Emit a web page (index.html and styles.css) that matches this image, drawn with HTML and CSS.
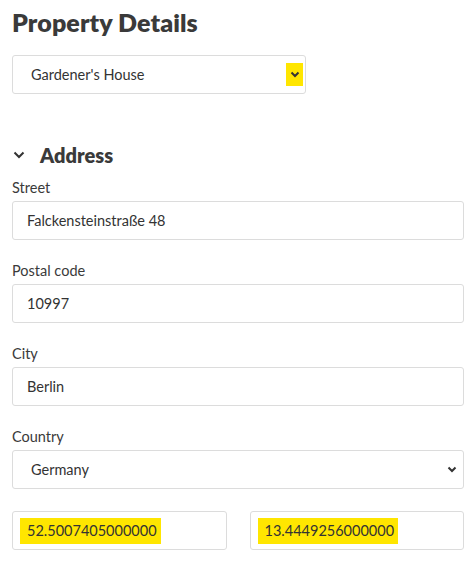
FILE: index.html
```html
<!DOCTYPE html>
<html>
<head>
<meta charset="utf-8">
<link rel="stylesheet" href="styles.css">
</head>
<body>
<div class="page">
  <h1 class="title">Property Details</h1>
  <div class="select select-top">
    <span class="select-text">Gardener's House</span>
    <span class="chev-mark"><svg width="10" height="7" viewBox="0 0 10 7"><path d="M1.5 1.5 L5 5 L8.5 1.5" fill="none" stroke="#333" stroke-width="2"/></svg></span>
  </div>

  <div class="section-head">
    <svg class="sec-chev" width="12" height="8" viewBox="0 0 12 8"><path d="M1.5 1.5 L6 6 L10.5 1.5" fill="none" stroke="#333" stroke-width="2"/></svg>
    <h2 class="section-title">Address</h2>
  </div>

  <div class="field">
    <label class="label">Street</label>
    <div class="input">Falckensteinstraße 48</div>
  </div>
  <div class="field">
    <label class="label">Postal code</label>
    <div class="input">10997</div>
  </div>
  <div class="field">
    <label class="label">City</label>
    <div class="input">Berlin</div>
  </div>
  <div class="field">
    <label class="label">Country</label>
    <div class="select select-wide">
      <span class="select-text">Germany</span>
      <svg class="plain-chev" width="10" height="7" viewBox="0 0 10 7"><path d="M1.5 1.5 L5 5 L8.5 1.5" fill="none" stroke="#333" stroke-width="2"/></svg>
    </div>
  </div>
  <div class="coords">
    <div class="input coord"><span class="hl">52.5007405000000</span></div>
    <div class="input coord"><span class="hl">13.4449256000000</span></div>
  </div>
</div>
</body>
</html>
```
FILE: styles.css
```css
* { box-sizing: border-box; }
body {
  margin: 0;
  background: #fff;
  font-family: "Lato", "Open Sans", sans-serif;
  color: #333;
}
.page {
  padding: 0 12px;
  width: 464px;
}
.title {
  margin: 0;
  padding-top: 6px;
  font-size: 25px;
  line-height: 32px;
  font-weight: 800;
  color: #3a3a3a;
  letter-spacing: 0.1px;
}
.select {
  display: flex;
  align-items: center;
  justify-content: space-between;
  border: 1px solid #dcdcdc;
  border-radius: 3px;
  background: #fff;
  font-size: 14.5px;
  color: #333;
}
.select-top {
  margin-top: 17px;
  width: 294px;
  height: 39px;
  padding: 0 2px 0 18px;
}
.chev-mark {
  width: 17px;
  height: 23px;
  background: #ffe600;
  display: flex;
  align-items: center;
  justify-content: center;
}
.section-head {
  display: flex;
  align-items: center;
  margin-top: 49px;
  height: 24px;
}
.sec-chev { margin-left: 1px; margin-right: 15px; }
.section-title {
  margin: 0;
  font-size: 20px;
  font-weight: 800;
  color: #3a3a3a;
}
.field { margin-top: 12px; }
.field + .field { margin-top: 22px; }
.label {
  display: block;
  font-size: 14.5px;
  line-height: 18px;
  color: #3a3a3a;
  margin-bottom: 4px;
}
.input {
  height: 39px;
  border: 1px solid #dcdcdc;
  border-radius: 3px;
  display: flex;
  align-items: center;
  padding-left: 14px;
  font-size: 14.5px;
  color: #333;
  width: 452px;
}
.select-wide {
  width: 452px;
  height: 39px;
  padding: 0 6px 0 18px;
}
.coords {
  display: flex;
  gap: 23px;
  margin-top: 22px;
  width: 452px;
}
.coord {
  flex: 1;
  width: auto;
  padding-left: 7px;
}
.hl {
  display: inline-block;
  background: #ffe600;
  height: 26px;
  line-height: 26px;
  padding: 0 4px 0 7px;
}
```
